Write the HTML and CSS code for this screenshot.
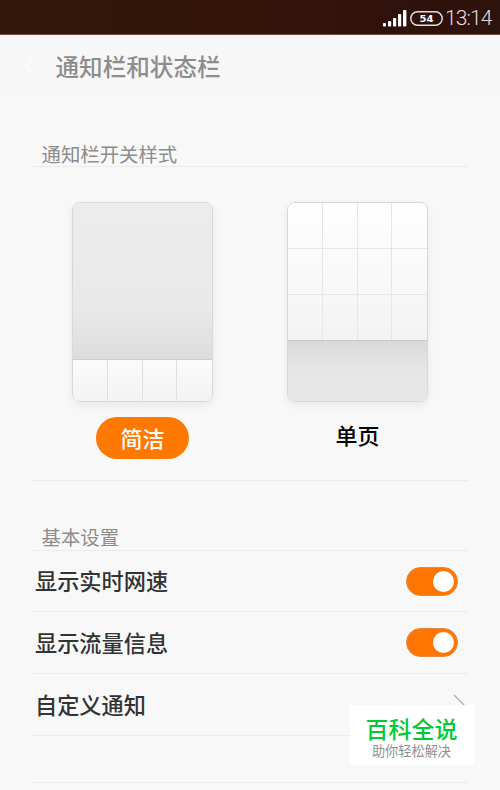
FILE: index.html
```
<!DOCTYPE html>
<html lang="zh-CN">
<head>
    <meta charset="UTF-8">
    <title>通知栏和状态栏</title>
    <link rel="stylesheet" href="styles.css">
</head>
<body>
    <div class="status-bar">
        <svg class="signal" width="24" height="17" viewBox="0 0 24 17">
            <rect x="0" y="13" width="3" height="3.5" rx="0.8"/>
            <rect x="5" y="11" width="3.2" height="5.5" rx="0.8"/>
            <rect x="10" y="8" width="3.2" height="8.5" rx="0.8"/>
            <rect x="15" y="4" width="3.2" height="12.5" rx="0.8"/>
            <rect x="20" y="0" width="3.4" height="16.5" rx="0.8"/>
        </svg>
        <svg class="battery" width="33" height="15" viewBox="0 0 33 15">
            <rect x="0.8" y="0.8" width="31.4" height="13.4" rx="6.7"/>
            <text x="16.5" y="11" textLength="14" lengthAdjust="spacingAndGlyphs">54</text>
        </svg>
        <span class="time">13:14</span>
    </div>
    <div class="header">
        <svg class="back" width="10" height="16" viewBox="0 0 10 16">
            <path d="M8 1L2 8l6 7"/>
        </svg>
        <h1>通知栏和状态栏</h1>
    </div>
    <div class="content">
        <h2 class="section-title">通知栏开关样式</h2>
        <div class="styles">
            <div class="option">
                <div class="preview">
                    <div class="panel panel-top"></div>
                    <div class="cells cells-bottom"><i></i><i></i><i></i><i></i></div>
                </div>
                <span class="label active">简洁</span>
            </div>
            <div class="option">
                <div class="preview">
                    <div class="cells cells-top">
                        <i></i><i></i><i></i><i></i>
                        <i></i><i></i><i></i><i></i>
                        <i></i><i></i><i></i><i></i>
                    </div>
                    <div class="panel panel-bottom"></div>
                </div>
                <span class="label">单页</span>
            </div>
        </div>
        <h2 class="section-title basic">基本设置</h2>
        <div class="row row-first"><span class="name">显示实时网速</span><span class="switch"></span></div>
        <div class="row"><span class="name">显示流量信息</span><span class="switch"></span></div>
        <div class="row">
            <span class="name">自定义通知</span>
            <svg class="arrow" width="12" height="22" viewBox="0 0 12 22">
                <path d="M1 1l10 10L1 21"/>
            </svg>
        </div>
        <div class="row row-empty"></div>
    </div>
    <div class="watermark">
        <strong>百科全说</strong>
        <span>助你轻松解决</span>
    </div>
</body>
</html>
```

FILE: styles.css
```
body {
    margin: 0;
    height: 790px;
    overflow: hidden;
    position: relative;
    background-color: #f8f8f8;
    font-family: "Noto Sans CJK SC", sans-serif;
}

h1, h2 {
    margin: 0;
}

.status-bar {
    display: flex;
    justify-content: flex-end;
    align-items: center;
    box-sizing: border-box;
    height: 35px;
    padding: 2px 8px 0 0;
    border-bottom: 1px solid #704c42;
    background: linear-gradient(90deg, #33170a, #33150b 60%, #30110b 80%, #2e120c);
    color: #e6dedb;
}

.signal {
    fill: #fff;
    margin-right: 3px;
}

.battery rect {
    fill: none;
    stroke: #e6dedb;
    stroke-width: 1.5;
}

.battery text {
    fill: #fff;
    font: bold 9.5px "DejaVu Sans", sans-serif;
    text-anchor: middle;
}

.time {
    width: 47px;
    margin-left: 2px;
    font: 300 21px/30px Roboto, sans-serif;
    letter-spacing: -0.9px;
    white-space: nowrap;
}

.header {
    display: flex;
    align-items: center;
    box-sizing: border-box;
    height: 62px;
    padding: 0 0 1px 24px;
    background-color: #f7f7f7;
}

.header h1 {
    margin-left: 21.5px;
    font-size: 23.6px;
    line-height: 34px;
    font-weight: 500;
    color: #8d8d8d;
}

.back {
    fill: none;
    stroke: #fdfdfd;
    stroke-width: 1.5;
}

.content {
    padding: 0 32px;
}

.section-title {
    box-sizing: border-box;
    height: 70px;
    padding: 43px 0 0 9.5px;
    border-bottom: 1px solid #ebebeb;
    font-size: 19.4px;
    line-height: 28px;
    font-weight: 400;
    color: #8c8c8c;
}

.section-title.basic {
    padding-top: 42px;
}

.styles {
    display: flex;
    justify-content: space-between;
    box-sizing: border-box;
    height: 314px;
    padding: 35px 40px 0;
    border-bottom: 1px solid #ebebeb;
}

.option {
    display: flex;
    flex-direction: column;
    align-items: center;
}

.preview {
    display: flex;
    flex-direction: column;
    box-sizing: border-box;
    width: 141px;
    height: 200px;
    border: 1px solid #d8d8d8;
    border-radius: 8px;
    overflow: hidden;
    box-shadow: 0 3px 8px rgba(0, 0, 0, 0.07);
}

.panel {
    flex: 1;
}

.panel-top {
    background: linear-gradient(#ececec, #e9e9e9 70%, #dcdcdc);
    border-bottom: 1px solid #cdcdcd;
}

.panel-bottom {
    background: linear-gradient(#d9d9d9, #e6e6e6 50%, #e8e8e8);
    border-top: 1px solid #cacaca;
}

.cells {
    display: grid;
    grid-template-columns: repeat(4, 1fr);
    background: linear-gradient(#fff, #f3f3f3);
}

.cells i {
    border-right: 1px solid #dfdfdf;
}

.cells i:nth-child(4n) {
    border-right: 0;
}

.cells-bottom {
    height: 41px;
    background: linear-gradient(#fbfbfb, #f3f3f3);
}

.cells-top {
    height: 137px;
    grid-template-rows: 46px 46px 45px;
}

.cells-top i {
    border-right-color: #e6e6e6;
    border-bottom: 1px solid #e6e6e6;
}

.cells-top i:nth-child(n+9) {
    border-bottom: 0;
}

.label {
    width: 93px;
    height: 42px;
    margin-top: 11px;
    font-size: 22px;
    line-height: 42px;
    font-weight: 500;
    text-align: center;
    color: #000;
}

.label.active {
    margin-top: 15px;
    border-radius: 21px;
    background-color: #ff7800;
    line-height: 40px;
    color: #fff;
}

.row {
    display: flex;
    justify-content: space-between;
    align-items: center;
    box-sizing: border-box;
    height: 62px;
    padding: 0 10px 0 3px;
    border-bottom: 1px solid #ebebeb;
    font-size: 22.2px;
    font-weight: 500;
    color: #333;
}

.row-first {
    height: 61px;
}

.row-empty {
    height: 47px;
}

.name {
    padding-bottom: 2px;
}

.switch {
    display: flex;
    justify-content: flex-end;
    align-items: center;
    box-sizing: border-box;
    width: 52px;
    height: 29px;
    padding-right: 3px;
    border: 1px solid #e58a45;
    border-radius: 15px;
    background-color: #ff7500;
}

.switch::after {
    content: "";
    width: 21px;
    height: 21px;
    border-radius: 50%;
    background-color: #fff;
}

.arrow {
    margin-right: -7px;
    fill: none;
    stroke: #aaa;
    stroke-width: 1.3;
}

/* floats over the last rows */
.watermark {
    position: absolute;
    left: 350px;
    top: 705px;
    box-sizing: border-box;
    width: 125px;
    height: 60px;
    padding: 7px 2px 0 0;
    background-color: #fff;
    text-align: center;
}

.watermark strong {
    display: block;
    font-size: 23px;
    line-height: 33px;
    font-weight: 500;
    color: #00cb35;
}

.watermark span {
    display: block;
    margin-top: -4px;
    font-size: 13.2px;
    line-height: 20px;
    color: #8f8f8f;
}
```
